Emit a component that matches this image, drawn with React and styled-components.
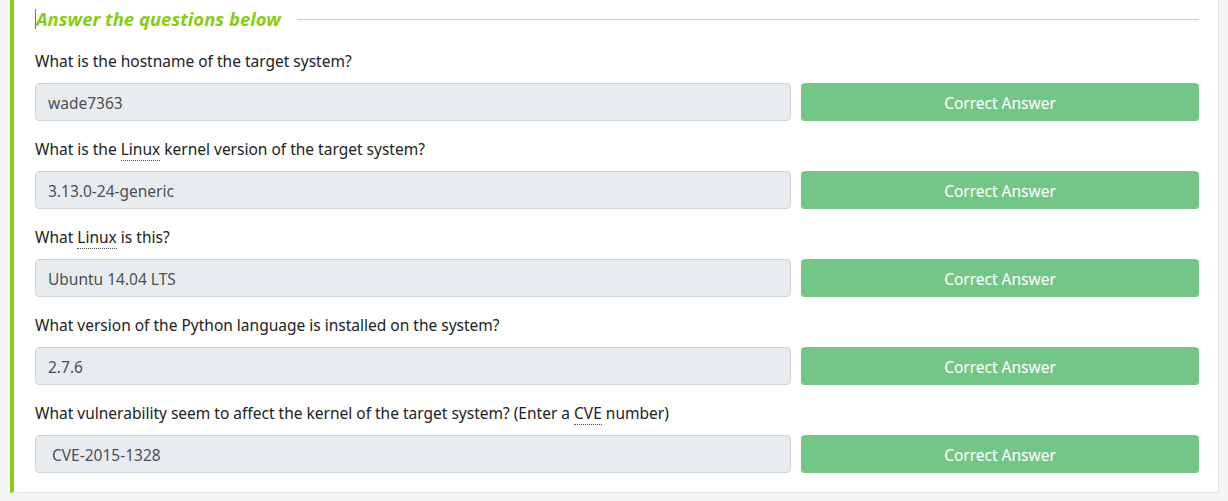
import React from 'react';
import styled, { createGlobalStyle } from 'styled-components';

const GlobalStyle = createGlobalStyle`
    body {
        margin: 0;
        background-color: #f5f5f5;
        font-family: "Noto Sans", "Open Sans", sans-serif;
    }
`;

const QUESTIONS = [
    { label: ['What is the hostname of the target system?'], answer: 'wade7363' },
    { label: ['What is the ', <Abbr key="a">Linux</Abbr>, ' kernel version of the target system?'], answer: '3.13.0-24-generic' },
    { label: ['What ', <Abbr key="a">Linux</Abbr>, ' is this?'], answer: 'Ubuntu 14.04 LTS' },
    { label: ['What version of the Python language is installed on the system?'], answer: '2.7.6' },
    { label: ['What vulnerability seem to affect the kernel of the target system? (Enter a ', <Abbr key="a">CVE</Abbr>, ' number)'], answer: 'CVE-2015-1328', indent: 16 },
];

function Abbr({ children }) {
    return <AbbrText>{children}</AbbrText>;
}

const AbbrText = styled.abbr`
    text-decoration: none;
    border-bottom: 1px dotted #555;
`;

const Page = styled.div`
    padding: 0 9px 8px 10px;
`;

const Card = styled.div`
    background-color: #fff;
    border-left: 4px solid #88cc14;
    border-right: 1px solid #e3e3e3;
    border-bottom: 1px solid #e3e3e3;
    padding: 8px 19px 19px 21px;
`;

const TitleRow = styled.div`
    display: flex;
    align-items: center;
    gap: 16px;
    height: 22px;
`;

const Title = styled.h3`
    margin: 0;
    font-size: 18.5px;
    font-weight: 700;
    font-style: italic;
    color: #88cc14;
    border-left: 1px solid #5b8f12;
    line-height: 20px;
`;

const Rule = styled.div`
    flex: 1;
    height: 1px;
    background-color: #cccccc;
`;

const Questions = styled.div`
    margin-top: 20px;
`;

const Question = styled.div`
    margin-bottom: 17px;

    &:last-child {
        margin-bottom: 0;
    }
`;

const Label = styled.div`
    font-size: 15.5px;
    line-height: 22px;
    color: #222;
    margin-bottom: 11px;
`;

const AnswerRow = styled.div`
    display: flex;
    gap: 10px;
`;

const AnswerInput = styled.div`
    flex: 1;
    height: 38px;
    box-sizing: border-box;
    display: flex;
    align-items: center;
    padding: 2px 0 0 ${(p) => p.indent || 12}px;
    background-color: #e9ecef;
    border: 1px solid #ced4da;
    border-radius: 4px;
    font-size: 15.5px;
    color: #495057;
`;

const CorrectButton = styled.button`
    width: 398px;
    height: 38px;
    padding: 2px 0 0;
    border: none;
    border-radius: 4px;
    background-color: #74c687;
    color: #fff;
    font-family: inherit;
    font-size: 15.5px;
`;

const App = () => (
    <Page>
        <GlobalStyle />
        <Card>
            <TitleRow>
                <Title>Answer the questions below</Title>
                <Rule />
            </TitleRow>
            <Questions>
                {QUESTIONS.map((q, i) => (
                    <Question key={i}>
                        <Label>{q.label}</Label>
                        <AnswerRow>
                            <AnswerInput indent={q.indent}>{q.answer}</AnswerInput>
                            <CorrectButton>Correct Answer</CorrectButton>
                        </AnswerRow>
                    </Question>
                ))}
            </Questions>
        </Card>
    </Page>
);

export default App;
